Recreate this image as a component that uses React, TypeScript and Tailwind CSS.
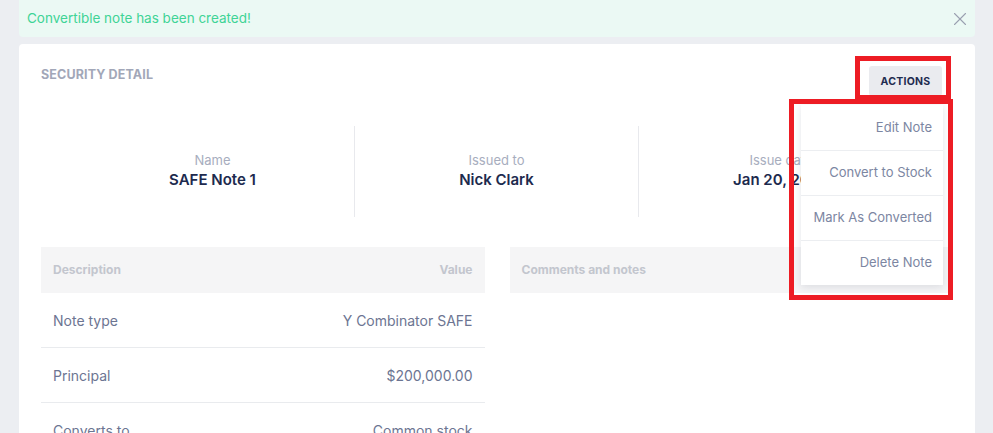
import { X } from 'lucide-react';

const stats = [
  { label: 'Name', value: 'SAFE Note 1' },
  { label: 'Issued to', value: 'Nick Clark' },
  { label: 'Issue date', value: 'Jan 20, 2020' },
];

const rows = [
  { label: 'Note type', value: 'Y Combinator SAFE' },
  { label: 'Principal', value: '$200,000.00' },
  { label: 'Converts to', value: 'Common stock' },
];

const menu = ['Edit Note', 'Convert to Stock', 'Mark As Converted', 'Delete Note'];

export default function App() {
  return (
    <div className="relative h-[433px] overflow-hidden bg-[#eceef2] pl-[19px] pr-[18px] font-['Inter',sans-serif]">
      <div className="flex h-[37px] items-center justify-between rounded-b-[4px] bg-[#ebf9f4] pl-2 pr-[4px]">
        <p className="text-[13.5px] text-[#3fd496]">Convertible note has been created!</p>
        <X className="h-[22px] w-[22px] text-[#9aa0b0]" strokeWidth={1.2} />
      </div>

      <div className="relative mt-[7px] rounded-[4px] bg-white px-[22px] pt-[22px] pb-10">
        <div className="flex items-start justify-between">
          <h2 className="mt-[1px] text-[12.5px] font-bold uppercase leading-4 tracking-[0.01em] text-[#a2a7b8]">
            Security Detail
          </h2>
          <button className="mr-[11px] h-[30px] w-[73px] rounded-[3px] bg-[#eaebef] pt-[1px] text-[10.5px] font-bold uppercase tracking-wide text-[#1f2c4f]">
            Actions
          </button>
        </div>

        <div className="mx-auto mt-[30px] grid h-[91px] w-[852px] grid-cols-3">
          {stats.map((s, i) => (
            <div
              key={s.label}
              className={`flex flex-col items-center justify-center pb-[4px] ${i < 2 ? 'border-r border-[#e8e9ed]' : ''}`}
            >
              <p className="text-[13px] leading-5 text-[#a7adbe]">{s.label}</p>
              <p className="text-[15px] font-semibold leading-5 text-[#1d2a4e]">{s.value}</p>
            </div>
          ))}
        </div>

        <div className="mt-[30px] grid grid-cols-2 gap-[25px]">
          <div>
            <div className="flex h-[46px] items-center justify-between bg-[#f5f5f6] px-3 text-[12px] font-bold text-[#c3c6ce]">
              <span>Description</span>
              <span>Value</span>
            </div>
            {rows.map((r) => (
              <div
                key={r.label}
                className="flex h-[55px] items-center justify-between border-b border-[#e9ebee] px-3 text-[14px] text-[#6c7592]"
              >
                <span>{r.label}</span>
                <span>{r.value}</span>
              </div>
            ))}
          </div>
          <div>
            <div className="flex h-[46px] items-center bg-[#f5f5f6] px-3 text-[12px] font-bold text-[#c3c6ce]">
              Comments and notes
            </div>
          </div>
        </div>
      </div>

      {/* dropdown menu */}
      <div className="absolute left-[801px] top-[105px] w-[142px] bg-white shadow-[0_2px_8px_rgba(30,40,70,0.12)]">
        {menu.map((m, i) => (
          <div
            key={m}
            className={`flex h-[45px] items-center justify-end pr-[11px] text-[13px] text-[#7c86a2] ${i > 0 ? 'border-t border-[#eceef1]' : ''}`}
          >
            {m}
          </div>
        ))}
      </div>

      {/* annotation boxes */}
      <div className="pointer-events-none absolute left-[855px] top-[56px] h-[44px] w-[96px] border-[5px] border-[#ed1c24]" />
      <div className="pointer-events-none absolute left-[789px] top-[99px] h-[201px] w-[164px] border-[5px] border-[#ed1c24]" />
    </div>
  );
}
